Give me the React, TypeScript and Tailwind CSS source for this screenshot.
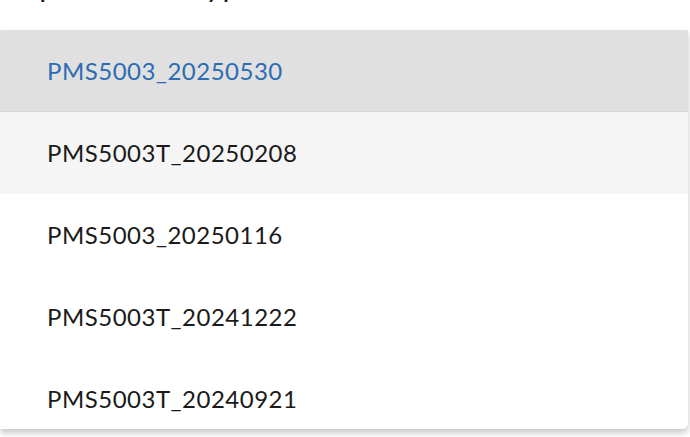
import React from "react";

const ITEMS = [
  "PMS5003_20250530",
  "PMS5003T_20250208",
  "PMS5003_20250116",
  "PMS5003T_20241222",
  "PMS5003T_20240921",
];

export default function App() {
  const selected = 0;
  const hovered = 1;

  return (
    <div className="w-[690px] h-[437px] bg-white overflow-hidden" style={{ fontFamily: "Lato, 'Noto Sans', sans-serif" }}>
      {/* heading above the open list, mostly scrolled out of view */}
      <div className="h-[30px] overflow-hidden pl-[24px]">
        <p className="-mt-[24px] text-[22px] font-bold leading-[28px] text-[#1a1a1a] whitespace-nowrap">
          Update firmware by product
        </p>
      </div>

      {/* Dropdown list */}
      <div className="w-[688px] h-[399px] overflow-hidden bg-white rounded-br-[6px] shadow-[0_4px_6px_rgba(0,0,0,0.22)]">
        {ITEMS.map((item, i) => (
          <div
            key={item}
            className={
              "h-[82px] flex items-center px-[47px] text-[24px] tracking-[0.5px] " +
              (i === selected
                ? "bg-[#e0e0e0] text-[#2b6cb3] border-b border-[#d5d5d5]"
                : i === hovered
                ? "bg-[#f5f5f5] text-[#1a1a1a]"
                : "bg-white text-[#1a1a1a]")
            }
          >
            {item}
          </div>
        ))}
      </div>
    </div>
  );
}
